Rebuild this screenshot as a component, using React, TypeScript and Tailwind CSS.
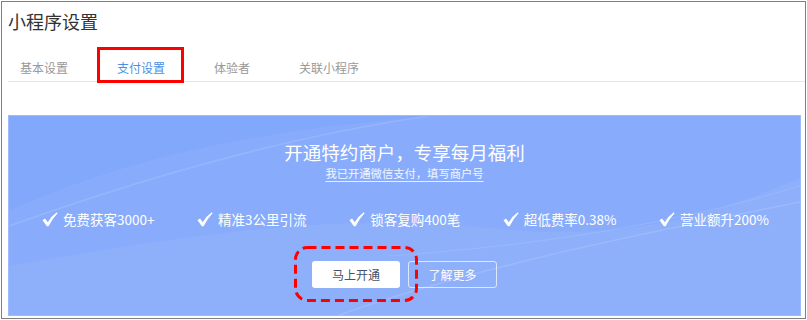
import React from "react";

const font = { fontFamily: '"Noto Sans CJK SC", "Noto Sans", sans-serif' };

function Check() {
  return (
    <svg width="16" height="15" viewBox="0 0 16 15" className="shrink-0">
      <path d="M0.5 8.2 L3 6.6 L5.8 10.2 Q9.5 4 14.8 0.3 L15.6 1.2 Q10.6 6.2 6.6 14.2 L4.9 14.2 Z" fill="#ffffff" />
    </svg>
  );
}

const features = ["免费获客3000+", "精准3公里引流", "锁客复购400笔", "超低费率0.38%", "营业额升200%"];

export default function App() {
  return (
    <div className="w-[807px] h-[320px] bg-white overflow-hidden" style={font}>
      <div className="ml-px mt-px w-[805px] h-[318px] border border-[#7f7f7f] bg-white relative">
        {/* title */}
        <div className="h-[37px] flex items-center pl-[6px] text-[18px] text-[#333333] leading-none">
          小程序设置
        </div>
        {/* tabs */}
        <div className="ml-[6px] h-[43px] border-b border-[#e6e6e6] flex gap-[25px] pt-[20px] text-[12px] leading-[17px]">
          <div className="px-[12px] text-[#999999]">基本设置</div>
          <div className="px-[12px] text-[#4a8fe7] relative">
            支付设置
            <span className="absolute left-[-8px] top-[-12px] w-[87px] h-[36px] border-[3px] border-[#ff0000]" />
          </div>
          <div className="px-[12px] text-[#999999]">体验者</div>
          <div className="px-[12px] text-[#999999]">关联小程序</div>
        </div>
        {/* banner */}
        <div className="ml-[6px] mt-[33px] w-[793px] h-[201px] border border-[#9ebbfc] bg-[#82a8fb] relative">
          <svg className="absolute inset-0" width="791" height="199" viewBox="0 0 791 199">
            <path d="M0 95 C 120 40 260 12 430 0 L 791 0 L 791 199 L 0 199 Z" fill="#ffffff" opacity="0.05" />
            <path d="M0 150 C 180 118 330 96 480 112 C 620 126 700 100 791 62 L 791 199 L 0 199 Z" fill="#ffffff" opacity="0.05" />
            <path d="M0 110 C 140 60 280 20 420 0" stroke="#ffffff" strokeOpacity="0.12" fill="none" strokeWidth="1.5" />
            <path d="M330 199 C 470 150 630 118 791 86" stroke="#ffffff" strokeOpacity="0.12" fill="none" strokeWidth="1.5" />
            <path d="M380 140 C 520 130 660 110 791 70" stroke="#ffffff" strokeOpacity="0.1" fill="none" strokeWidth="1" />
          </svg>
          <div className="relative flex flex-col items-center">
            <div className="mt-[24px] text-[18.5px] leading-[24px] text-white">开通特约商户，专享每月福利</div>
            <div className="mt-px text-[11.3px] leading-[16px] text-white/90 underline underline-offset-[3px] decoration-white/80">
              我已开通微信支付，填写商户号
            </div>
            <div className="mt-[29px] w-full pl-[33px] pr-[31px] flex justify-between">
              {features.map((f) => (
                <div key={f} className="flex items-center gap-[5px]">
                  <Check />
                  <span className="text-[13.5px] leading-[18px] text-white">{f}</span>
                </div>
              ))}
            </div>
            <div className="mt-[33px] flex gap-[8px]">
              <div className="relative w-[88px] h-[27px] rounded-[3px] bg-white flex items-center justify-center text-[12px] text-[#44516b]">
                马上开通
                <svg className="absolute left-[-18px] top-[-15px]" width="124" height="56" viewBox="0 0 124 56">
                  <rect x="1.5" y="1.5" width="121" height="53" rx="12" fill="none" stroke="#ff0000" strokeWidth="3" strokeDasharray="9 5" />
                </svg>
              </div>
              <div className="w-[89px] h-[27px] rounded-[3px] border border-white/70 flex items-center justify-center text-[12px] text-white">
                了解更多
              </div>
            </div>
          </div>
        </div>
      </div>
    </div>
  );
}
